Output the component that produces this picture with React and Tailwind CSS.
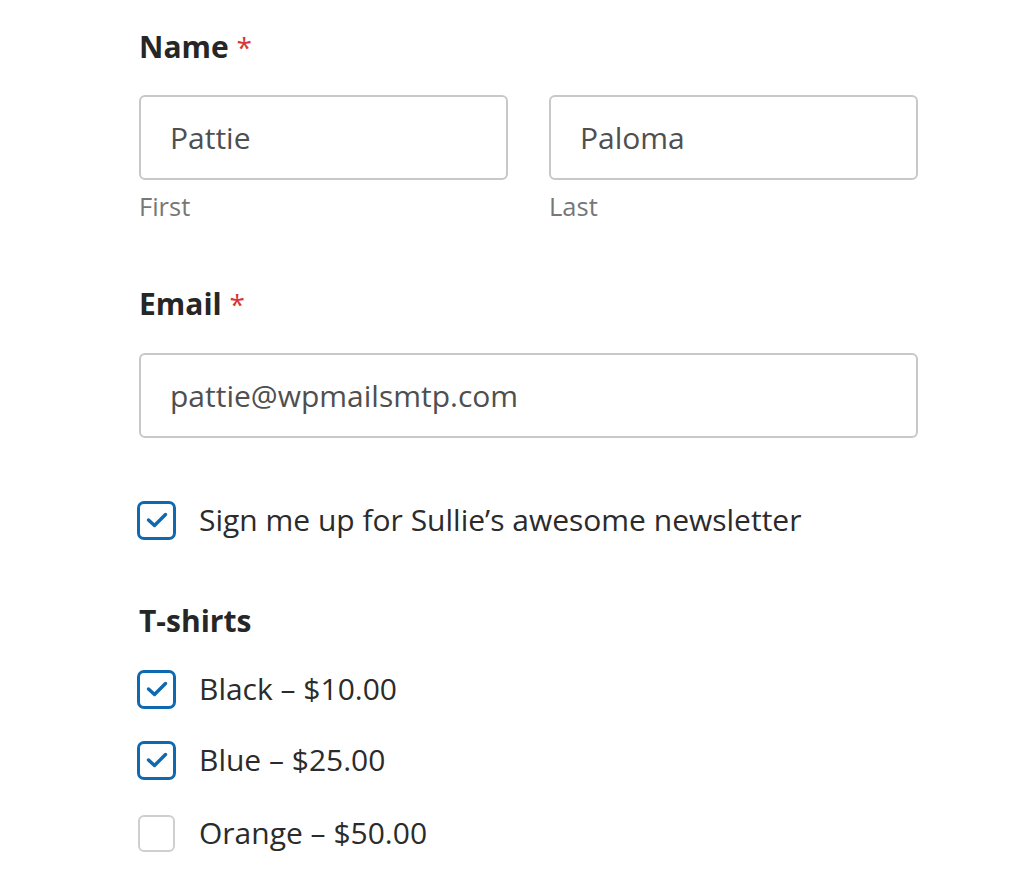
import { useState } from "react";

function Check({ checked, onClick }) {
  return (
    <button
      type="button"
      onClick={onClick}
      className={
        checked
          ? "w-[39px] h-[39px] rounded-[7px] border-[3px] border-[#0e69b0] flex items-center justify-center bg-white shrink-0"
          : "w-[37px] h-[37px] ml-[1px] mr-[1px] rounded-[6px] border-[2px] border-[#cfcfcf] bg-white shrink-0"
      }
    >
      {checked && (
        <svg width="22" height="16" viewBox="0 0 22 16" fill="none">
          <path d="M2.5 8 L8.5 13.5 L19.5 2.5" stroke="#0e69b0" strokeWidth="3.4" strokeLinecap="round" strokeLinejoin="round" />
        </svg>
      )}
    </button>
  );
}

function CheckRow({ label, checked, onClick, className }) {
  return (
    <div className={"flex items-center gap-[23px] h-[40px] -ml-[2px] " + (className || "")}>
      <Check checked={checked} onClick={onClick} />
      <span className="text-[30px] leading-[40px] text-[#2b2b2b]">{label}</span>
    </div>
  );
}

export default function App() {

  const [first, setFirst] = useState("Pattie");
  const [last, setLast] = useState("Paloma");
  const [email, setEmail] = useState("pattie@wpmailsmtp.com");
  const [news, setNews] = useState(true);
  const [shirts, setShirts] = useState({ black: true, blue: true, orange: false });

  const toggle = (k) => setShirts({ ...shirts, [k]: !shirts[k] });

  return (

    <div className="min-h-screen bg-white pt-[27px] pl-[139px]" style={{ fontFamily: '"Open Sans", "Noto Sans", sans-serif' }}>

      <div className="w-[779px]">

        <label className="block text-[30px] leading-[40px] font-bold text-[#262626]">
          Name <span className="text-[#d63637] font-normal text-[28px]">*</span>
        </label>

        <div className="flex gap-[41px] mt-[28px]">
          <div className="flex-1">
            <input
              value={first}
              onChange={(e) => setFirst(e.target.value)}
              className="w-full h-[85px] border-2 border-[#c8c8c8] rounded-[6px] px-[29px] text-[30px] text-[#4f4f4f] outline-none"
            />
            <div className="mt-[10px] text-[25.5px] leading-[32px] text-[#777777]">First</div>
          </div>
          <div className="flex-1">
            <input
              value={last}
              onChange={(e) => setLast(e.target.value)}
              className="w-full h-[85px] border-2 border-[#c8c8c8] rounded-[6px] px-[29px] text-[30px] text-[#4f4f4f] outline-none"
            />
            <div className="mt-[10px] text-[25.5px] leading-[32px] text-[#777777]">Last</div>
          </div>
        </div>

        <label className="block mt-[62px] text-[30px] leading-[40px] font-bold text-[#262626]">
          Email <span className="text-[#d63637] font-normal text-[28px]">*</span>
        </label>

        <input
          value={email}
          onChange={(e) => setEmail(e.target.value)}
          className="mt-[29px] w-full h-[85px] border-2 border-[#c8c8c8] rounded-[6px] px-[29px] text-[30px] text-[#4f4f4f] outline-none"
        />

        <CheckRow
          className="mt-[62px]"
          label="Sign me up for Sullie’s awesome newsletter"
          checked={news}
          onClick={() => setNews(!news)}
        />

        <label className="block mt-[61px] text-[30px] leading-[40px] font-bold text-[#262626]">
          T-shirts
        </label>

        <CheckRow className="mt-[28px]" label="Black – $10.00" checked={shirts.black} onClick={() => toggle("black")} />
        <CheckRow className="mt-[31px]" label="Blue – $25.00" checked={shirts.blue} onClick={() => toggle("blue")} />
        <CheckRow className="mt-[33px]" label="Orange – $50.00" checked={shirts.orange} onClick={() => toggle("orange")} />

      </div>

    </div>

  );
}
